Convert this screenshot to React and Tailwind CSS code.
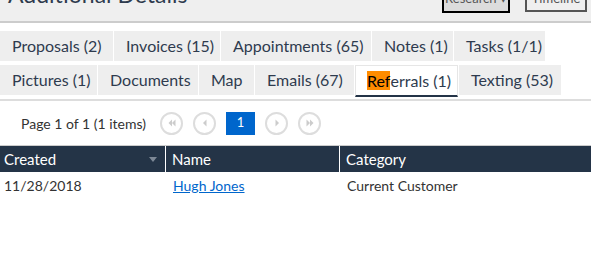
import React from 'react';

const font = { fontFamily: 'Lato, "Open Sans", sans-serif' };

const rowOne = [
  ['Proposals (2)', 'w-[113px]'],
  ['Invoices (15)', 'w-[106px]'],
  ['Appointments (65)', 'w-[150px]'],
  ['Notes (1)', 'w-[81px]'],
  ['Tasks (1/1)', 'w-[91px]'],
];
const rowTwo = [
  ['Pictures (1)', 'w-[97px]'],
  ['Documents', 'w-[100px]'],
  ['Map', 'w-[55px]'],
  ['Emails (67)', 'w-[99px]'],
  ['Referrals (1)', 'w-[103px]'],
  ['Texting (53)', 'w-[102px]'],
];

const Tab = ({ label, width, active }) => {
  if (active) {
    return (
      <div className={`${width} h-[32px] pl-[11px] mr-px bg-white border border-[#e6e6e6] border-b-2 border-b-[#243447] flex items-center text-[16px] text-[#2e3b4e] whitespace-nowrap`}>
        <span className="bg-[#ff8c00] inline-block leading-[19px] text-black">Ref</span>errals (1)
      </div>
    );
  }
  return (
    <div className={`${width} h-[30px] pl-[12px] mr-px bg-[#eeeeee] flex items-center text-[16px] text-[#2e3b4e] whitespace-nowrap`}>
      {label}
    </div>
  );
};

const Circle = ({ dir }) => (
  <div className="w-[23px] h-[23px] rounded-full border-2 border-[#dddddd] flex items-center justify-center">
    <svg width="10" height="10" viewBox="0 0 10 10" fill="#cccccc">
      {dir === 'first' && (<><path d="M5 1.5 L1.5 5 L5 8.5 Z" /><path d="M8.5 1.5 L5 5 L8.5 8.5 Z" /></>)}
      {dir === 'prev' && <path d="M6.5 1.5 L3 5 L6.5 8.5 Z" />}
      {dir === 'next' && <path d="M3.5 1.5 L7 5 L3.5 8.5 Z" />}
      {dir === 'last' && (<><path d="M1.5 1.5 L5 5 L1.5 8.5 Z" /><path d="M5 1.5 L8.5 5 L5 8.5 Z" /></>)}
    </svg>
  </div>
);

export default function App() {
  return (
    <div className="w-[591px] h-[268px] bg-white overflow-hidden relative" style={font}>
      {/* header */}
      <div className="h-[23px] bg-[#efefef] border-b-2 border-[#cccccc] flex justify-between overflow-hidden">
        <div className="text-[23px] leading-none text-[#2e3b4e] pl-[8px] -mt-[17px] whitespace-nowrap">Additional Details</div>
        <div className="flex items-start gap-[15px] pr-[4px] -mt-[16px]">
          <div className="w-[68px] h-[29px] border-2 border-black bg-[#dcdcdc] text-[13px] text-[#555] flex items-start pt-[3px] justify-center whitespace-nowrap">Research ▾</div>
          <div className="w-[62px] h-[28px] border-2 border-[#555555] text-[13px] text-[#555] flex items-start pt-[3px] justify-center">Timeline</div>
        </div>
      </div>

      {/* tabs */}
      <div className="pt-[8px] border-b-2 border-[#dddddd]">
        <div className="flex">
          {rowOne.map(([t, w]) => <Tab key={t} label={t} width={w} />)}
        </div>
        <div className="flex items-start mt-[4px] mb-[2px]">
          {rowTwo.map(([t, w]) => <Tab key={t} label={t} width={w} active={t === 'Referrals (1)'} />)}
        </div>
      </div>

      {/* pager */}
      <div className="flex items-center h-[44px] pl-[21px]">
        <span className="w-[139px] text-[14px] text-[#333333] whitespace-nowrap">Page 1 of 1 (1 items)</span>
        <div className="flex items-center gap-[10px]">
          <Circle dir="first" />
          <Circle dir="prev" />
          <div className="w-[29px] h-[23px] bg-[#0066cc] text-white text-[13px] flex items-center justify-center">1</div>
          <Circle dir="next" />
          <Circle dir="last" />
        </div>
      </div>

      {/* table */}
      <div className="border-t border-[#cccccc]">
        <div className="flex h-[26px] bg-[#243447] text-[15px] text-white">
          <div className="w-[166px] flex items-center justify-between pl-[4px] pr-[8px] border-r border-white">
            <span>Created</span>
            <svg width="8" height="5" viewBox="0 0 8 5"><path d="M0 0 L8 0 L4 5 Z" fill="#7d8896" /></svg>
          </div>
          <div className="w-[174px] flex items-center pl-[6px] border-r border-white">Name</div>
          <div className="flex-1 flex items-center pl-[6px]">Category</div>
        </div>
        <div className="flex h-[26px] text-[14px] text-[#333333]">
          <div className="w-[166px] flex items-center pl-[4px]">11/28/2018</div>
          <div className="w-[174px] flex items-center pl-[7px]">
            <a href="#" className="text-[#0066cc] underline">Hugh Jones</a>
          </div>
          <div className="flex-1 flex items-center pl-[7px]">Current Customer</div>
        </div>
      </div>
    </div>
  );
}
